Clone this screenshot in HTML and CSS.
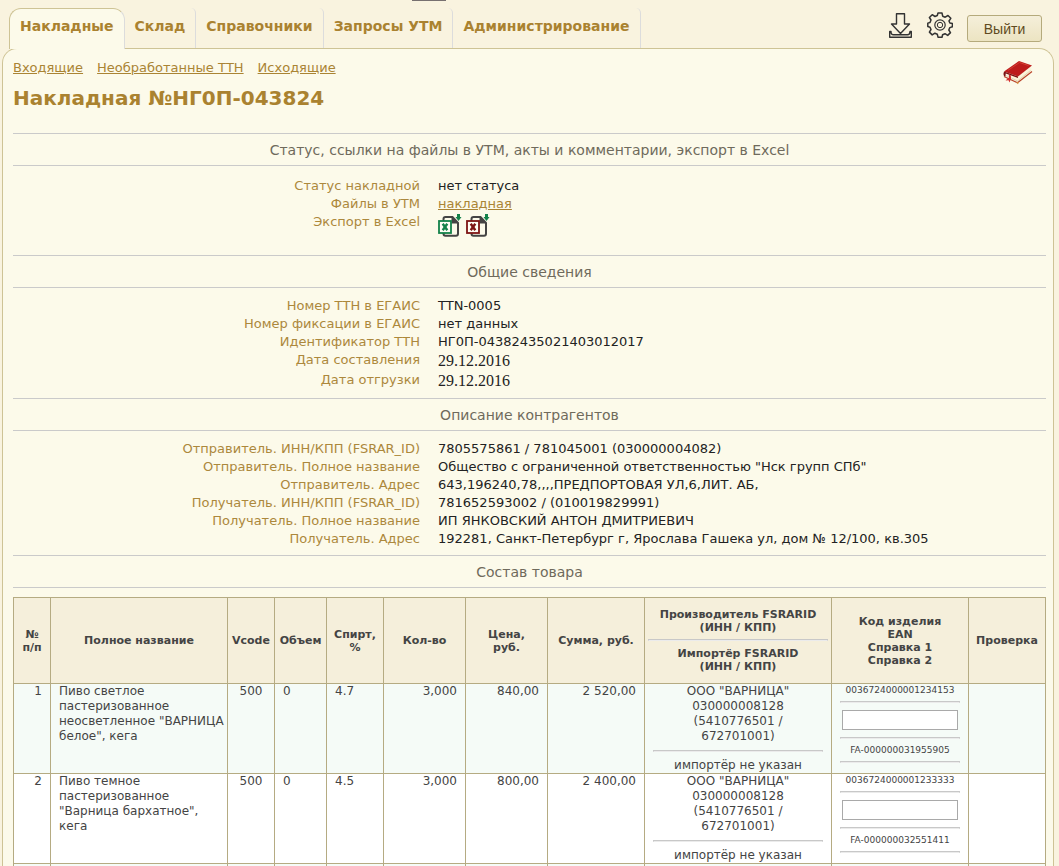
FILE: index.html
```html
<!DOCTYPE html>
<html lang="ru">
<head>
<meta charset="utf-8">
<title>Накладная №НГ0П-043824</title>
<link rel="stylesheet" href="styles.css">
</head>
<body>
<div class="handle"></div>
<header class="top">
  <nav class="tabs">
    <a class="tab active" href="#">Накладные</a>
    <a class="tab" href="#">Склад</a>
    <a class="tab" href="#">Справочники</a>
    <a class="tab" href="#">Запросы УТМ</a>
    <a class="tab" href="#">Администрирование</a>
  </nav>
  <div class="tools">
    <a href="#" aria-label="Загрузить"><svg width="25" height="28" viewBox="0 0 25 28" fill="none" stroke="#333" stroke-width="1.4" stroke-linejoin="round"><path d="M8.500 1.700H16.500V12H21.500L12.500 21.500L3.500 12H8.500Z"/><path d="M3 19.500H1.700V25.300H23.300V19.500H22Q22 22.700 19.500 22.700H5.500Q3 22.700 3 19.500Z"/></svg></a>
    <a href="#" aria-label="Настройки"><svg width="26" height="26" viewBox="0 0 26 26" fill="none" stroke="#333" stroke-width="1.500" stroke-linejoin="round"><path d="M11 1h4l.7 3.200 2.500 1L21 3.500l2.800 2.800L22 9l.9 2 2.500.6v3.200l-2.600.8-1 2.400 1.700 2.600-2.800 2.800-2.700-1.700-2.400 1L15 25.200h-4l-.7-3-2.400-1-2.700 1.700-2.800-2.800L4 17.500l-1-2.300L.8 14.500v-3.400L3 10.500 4 8 2.400 5.500l2.800-2.800L8 4.500l2.300-1Z"/><circle cx="13" cy="13" r="5.200" stroke-width="1.200"/><circle cx="13" cy="13" r="2.700" stroke-width="1"/></svg></a>
    <button class="logout" type="button">Выйти</button>
  </div>
</header>
<main class="panel">
  <div class="panel-head">
    <nav class="subnav">
      <a href="#">Входящие</a>
      <a href="#">Необработанные ТТН</a>
      <a href="#">Исходящие</a>
    </nav>
    <a class="book" href="#" aria-label="Справка"><svg width="30" height="26" viewBox="0 0 30 26"><path d="M2 14 14.500 23 28.500 12 28 7.500 15 17Z" fill="#fbf3da"/><path d="M3 16.500 14.500 22 27.500 11.500" fill="none" stroke="#dccba4" stroke-width=".8"/><path d="M1 17.500 14.500 23.700 29 12.500" fill="none" stroke="#b9442a" stroke-width="1.200"/><path d="M1 12.500 16 2 29 6.500 15 17.500Z" fill="#bd1c1c"/><path d="M1 12.500 15 17.500V19L2.700 14.500 2.500 17.500 1 17Q0 14.500 1 12.500Z" fill="#7c1313"/><path d="M5 11.300 16.500 3.500 25.500 6.500" fill="none" stroke="#d8473a" stroke-width=".8"/><path d="M5.800 15.500 6 18.500 2.500 21.500 5.500 21.300 6.500 23.500 8 19.500 7.800 16.300Z" fill="#d42c2c"/><path d="M13 23.500 15 25.200 16 23Z" fill="#d99a45"/></svg></a>
  </div>
  <h1>Накладная №НГ0П-043824</h1>

  <section>
    <h2>Статус, ссылки на файлы в УТМ, акты и комментарии, экспорт в Excel</h2>
    <dl class="facts status">
      <dt>Статус накладной</dt><dd>нет статуса</dd>
      <dt>Файлы в УТМ</dt><dd><a href="#">накладная</a></dd>
      <dt>Экспорт в Excel</dt>
      <dd class="exports">
        <a class="green" href="#" aria-label="Экспорт в XLSX"><svg width="24" height="24" viewBox="0 0 24 24" fill="none"><path d="M5.500 7V5Q5.500 3 7.500 3H14.500L20 9V19.500Q20 21.700 18 21.700H7.500Q5.500 21.700 5.500 19.500V18" stroke="#444" stroke-width="2"/><path d="M13.500 2.500V9.500H20.500Z" fill="#444"/><rect x="1" y="7" width="12" height="12" fill="#fffef5" stroke="currentColor" stroke-width="1.800"/><path d="M4.700 9.700 9.300 16.300M9.300 9.700 4.700 16.300" stroke="currentColor" stroke-width="2.400"/><path d="M19 0h3v3h1.500L20.500 7 17.500 3H19Z" fill="#13824a"/></svg></a>
        <a class="red" href="#" aria-label="Экспорт в XLS"><svg width="24" height="24" viewBox="0 0 24 24" fill="none"><path d="M5.500 7V5Q5.500 3 7.500 3H14.500L20 9V19.500Q20 21.700 18 21.700H7.500Q5.500 21.700 5.500 19.500V18" stroke="#444" stroke-width="2"/><path d="M13.500 2.500V9.500H20.500Z" fill="#444"/><rect x="1" y="7" width="12" height="12" fill="#fffef5" stroke="currentColor" stroke-width="1.800"/><path d="M4.700 9.700 9.300 16.300M9.300 9.700 4.700 16.300" stroke="currentColor" stroke-width="2.400"/><path d="M19 0h3v3h1.500L20.500 7 17.500 3H19Z" fill="#13824a"/></svg></a>
      </dd>
    </dl>
  </section>

  <section>
    <h2>Общие сведения</h2>
    <dl class="facts">
      <dt>Номер ТТН в ЕГАИС</dt><dd>TTN-0005</dd>
      <dt>Номер фиксации в ЕГАИС</dt><dd>нет данных</dd>
      <dt>Идентификатор ТТН</dt><dd>НГ0П-04382435021403012017</dd>
      <dt>Дата составления</dt><dd class="date">29.12.2016</dd>
      <dt>Дата отгрузки</dt><dd class="date">29.12.2016</dd>
    </dl>
  </section>

  <section>
    <h2>Описание контрагентов</h2>
    <dl class="facts">
      <dt>Отправитель. ИНН/КПП (FSRAR_ID)</dt><dd>7805575861 / 781045001 (030000004082)</dd>
      <dt>Отправитель. Полное название</dt><dd>Общество с ограниченной ответственностью "Нск групп СПб"</dd>
      <dt>Отправитель. Адрес</dt><dd>643,196240,78,,,,ПРЕДПОРТОВАЯ УЛ,6,ЛИТ. АБ,</dd>
      <dt>Получатель. ИНН/КПП (FSRAR_ID)</dt><dd>781652593002 / (010019829991)</dd>
      <dt>Получатель. Полное название</dt><dd>ИП ЯНКОВСКИЙ АНТОН ДМИТРИЕВИЧ</dd>
      <dt>Получатель. Адрес</dt><dd>192281, Санкт-Петербург г, Ярослава Гашека ул, дом № 12/100, кв.305</dd>
    </dl>
  </section>

  <section>
    <h2>Состав товара</h2>
    <table class="goods">
      <colgroup><col class="c-num"><col><col class="c-vcode"><col class="c-vol"><col class="c-alc"><col class="c-qty"><col class="c-qty"><col class="c-sum"><col class="c-maker"><col class="c-code"><col class="c-check"></colgroup>
      <thead>
        <tr>
          <th>№<br>п/п</th><th>Полное название</th><th>Vcode</th><th>Объем</th><th>Спирт,<br>%</th><th>Кол-во</th><th>Цена,<br>руб.</th><th>Сумма, руб.</th>
          <th>Производитель FSRARID<br>(ИНН / КПП)<hr>Импортёр FSRARID<br>(ИНН / КПП)</th>
          <th>Код изделия<br>EAN<br>Справка 1<br>Справка 2</th><th>Проверка</th>
        </tr>
      </thead>
      <tbody>
        <tr>
          <td class="num">1</td><td class="name">Пиво светлое<br>пастеризованное<br>неосветленное "ВАРНИЦА<br>белое", кега</td><td class="mid">500</td><td>0</td><td>4.7</td><td class="num">3,000</td><td class="num">840,00</td><td class="num">2 520,00</td>
          <td class="mid">ООО "ВАРНИЦА"<br>030000008128<br>(5410776501 /<br>672701001)<hr>импортёр не указан</td>
          <td class="code"><span>0036724000001234153</span><hr><input type="text" aria-label="EAN, позиция 1"><hr><span>FA-000000031955905</span><hr></td><td></td>
        </tr>
        <tr>
          <td class="num">2</td><td class="name">Пиво темное<br>пастеризованное<br>"Варница бархатное",<br>кега</td><td class="mid">500</td><td>0</td><td>4.5</td><td class="num">3,000</td><td class="num">800,00</td><td class="num">2 400,00</td>
          <td class="mid">ООО "ВАРНИЦА"<br>030000008128<br>(5410776501 /<br>672701001)<hr>импортёр не указан</td>
          <td class="code"><span>0036724000001233333</span><hr><input type="text" aria-label="EAN, позиция 2"><hr><span>FA-000000032551411</span><hr></td><td></td>
        </tr>
        <tr class="next"><td></td><td></td><td></td><td></td><td></td><td></td><td></td><td></td><td></td><td></td><td></td></tr>
      </tbody>
    </table>
  </section>
</main>
</body>
</html>
```

FILE: styles.css
```css
* { box-sizing: border-box; }

body {
  margin: 0;
  min-height: 100vh;
  display: flex;
  flex-direction: column;
  padding: 0 5px 0 2px;
  background: #f9f3df;
  color: #222;
  font: 13px/18px Verdana, "DejaVu Sans", sans-serif;
}

a { color: #aa8434; }

.handle {
  position: absolute;
  top: 0;
  left: 412px;
  width: 34px;
  height: 1px;
  background: #777070;
}

.top {
  display: flex;
  justify-content: space-between;
  padding: 8px 12px 0 7px;
}

.tabs { display: flex; }

.tab {
  height: 40px;
  padding: 9px 10px 0;
  border-right: 1px solid #dcdcdc;
  border-top-right-radius: 5px;
  color: #aa8230;
  font-size: 14px;
  font-weight: bold;
  text-decoration: none;
}

.tab.active {
  position: relative;
  height: 41px;
  margin-bottom: -1px;
  padding-top: 8px;
  border: 1px solid #cec395;
  border-right-color: #dcdcdc;
  border-bottom: 0;
  border-radius: 12px 12px 0 0;
  background: #fcfaea;
}

.tools {
  display: flex;
  align-items: flex-start;
  gap: 14px;
  padding-top: 4px;
}

.tools svg, .book svg, .exports svg { display: block; }

.logout {
  width: 75px;
  height: 27px;
  margin-top: 3px;
  padding: 0;
  border: 1px solid #b5aa7c;
  border-radius: 3px;
  background: linear-gradient(#f5efda, #ece4c2);
  color: #604a20;
  font: 14px "Liberation Sans", Arial, sans-serif;
}

.panel {
  flex: 1;
  padding: 10px 7px 0 10px;
  border: 1px solid #cec395;
  border-bottom: 0;
  border-radius: 15px 15px 0 0;
  background: #fcfaea;
}

.panel-head {
  display: flex;
  justify-content: space-between;
  height: 25px;
  padding-right: 13px;
}

.subnav { display: flex; gap: 14px; }

h1 {
  margin: 0 0 21px;
  color: #aa8230;
  font-size: 20px;
  line-height: 28px;
}

h2 {
  margin: 0;
  padding: 7px 0 6px;
  border: solid #cacaca;
  border-width: 1px 0;
  color: #6f6a5c;
  font-size: 14px;
  font-weight: normal;
  line-height: 18px;
  text-align: center;
}

.facts {
  display: grid;
  grid-template-columns: 407fr 608fr;
  column-gap: 18px;
  margin: 0;
  padding: 9px 0 7px;
}

.facts.status { padding: 11px 0 7px; }

dt { color: #ac883c; text-align: right; }

dd { margin: 0; }

.date { font: 16px/20px "Liberation Serif", "Times New Roman", serif; }

.exports { display: flex; gap: 4px; padding: 1px 0 10px; }

.green { color: #13824a; }

.red { color: #7e1414; }

.goods {
  width: 100%;
  margin-top: 9px;
  border-collapse: collapse;
  table-layout: fixed;
  color: #444;
  font-size: 12px;
  line-height: 15px;
}

.c-num { width: 37px; }
.c-vcode { width: 47px; }
.c-vol { width: 52px; }
.c-alc { width: 57px; }
.c-qty { width: 82px; }
.c-sum { width: 97px; }
.c-maker { width: 187px; }
.c-code { width: 137px; }
.c-check { width: 77px; }

th, td { border: 1px solid #b5ab82; }

th {
  height: 86px;
  padding: 0 3px;
  background: #f5efdb;
  font-size: 11px;
  line-height: 13px;
}

td { padding: 0 8px; vertical-align: top; }

tbody tr { background: #fff; }

tbody tr:nth-child(odd) { background: #f5fbf7; }

.name { padding-right: 0; }

.num { text-align: right; }

.mid { text-align: center; }

hr {
  margin: 6px 0;
  border: 1px solid #c8c8c8;
  border-bottom-color: #ebebeb;
}

th hr { margin: 5px 0 6px; }

.code { font-size: 9px; line-height: 13px; text-align: center; }

.code span { display: block; }

.code hr { margin: 4px 0 7px; }

.code input {
  display: block;
  width: 116px;
  max-width: 100%;
  height: 20px;
  margin: 0 auto;
  padding: 1px;
  border: 1px solid #a9a9a9;
  background: #fff;
}

.code input + hr { margin: 7px 0 5px; }

.code hr:last-child { margin-bottom: 0; }

.next td { height: 3px; border-bottom: 0; }
```
